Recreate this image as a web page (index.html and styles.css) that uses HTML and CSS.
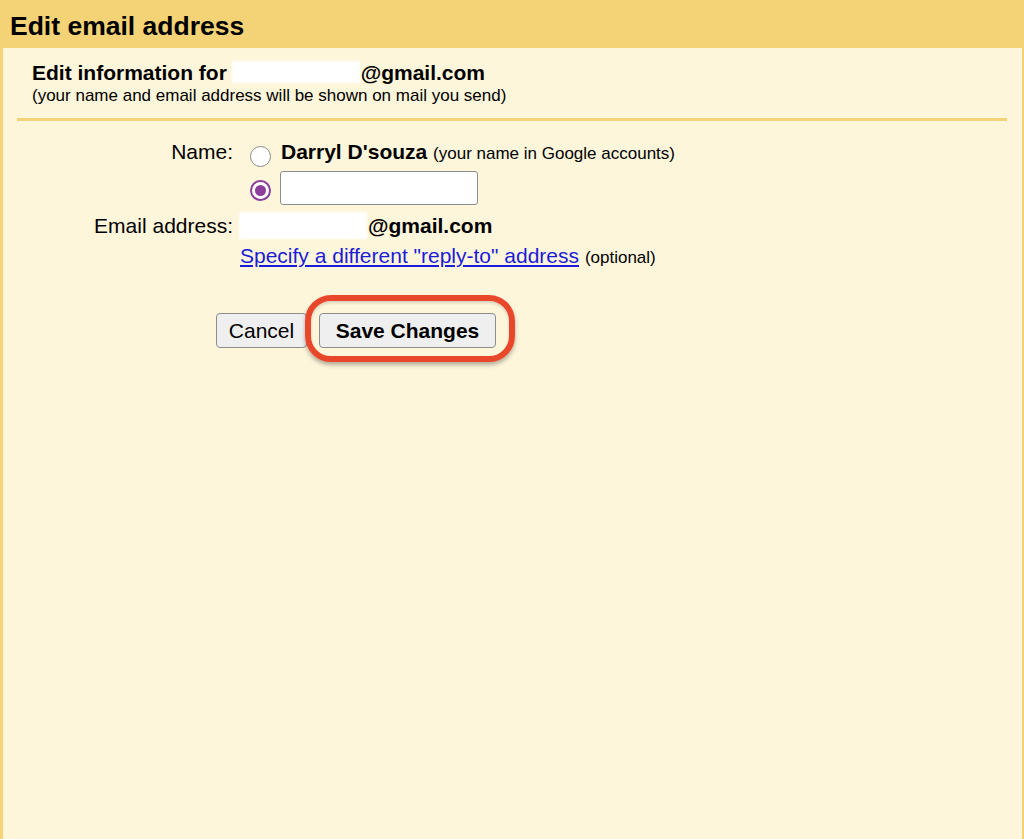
FILE: index.html
```html
<!DOCTYPE html>
<html>
<head>
<meta charset="utf-8">
<link rel="stylesheet" href="styles.css">
</head>
<body>
<div class="header"><h1 class="title">Edit email address</h1></div>
<div class="panel">
  <div class="intro">
    <div class="intro-title">Edit information for <span class="redact redact-a"></span>@gmail.com</div>
    <div class="intro-sub">(your name and email address will be shown on mail you send)</div>
  </div>
  <div class="sep"></div>
  <div class="form">
    <div class="label r1">Name:</div>
    <div class="value r1"><span class="radio"></span><span class="txt"><b>Darryl D'souza</b> <span class="small">(your name in Google accounts)</span></span></div>
    <div class="label r2"></div>
    <div class="value r2"><span class="radio checked"></span><span class="textbox"></span></div>
    <div class="label r3">Email address:</div>
    <div class="value r3"><span class="txt"><span class="redact redact-b"></span><b class="at">@gmail.com</b></span></div>
    <div class="label r4"></div>
    <div class="value r4"><span class="txt"><a class="link" href="#">Specify a different "reply-to" address</a> <span class="small">(optional)</span></span></div>
  </div>
  <div class="actions">
    <button class="btn cancel">Cancel</button>
    <span class="highlight"><button class="btn save">Save Changes</button></span>
  </div>
</div>
</body>
</html>
```
FILE: styles.css
```css
html, body {
  margin: 0;
  padding: 0;
}
body {
  min-height: 100vh;
  display: flex;
  flex-direction: column;
  font-family: "Liberation Sans", Arial, Helvetica, sans-serif;
  color: #000;
  background: #f3d375;
}
.header {
  height: 48px;
  box-sizing: border-box;
  padding: 11px 0 0 10px;
  background: #f3d375;
}
.title {
  margin: 0;
  font-size: 26.5px;
  font-weight: bold;
  line-height: 31px;
}
.panel {
  flex: 1;
  background: #fef6db;
  border-left: 3px solid #f3d375;
  border-right: 2px solid #f3d375;
}
.intro {
  padding: 13px 0 0 29px;
}
.intro-title {
  font-size: 21px;
  font-weight: bold;
  line-height: 24px;
}
.intro-sub {
  font-size: 17px;
  line-height: 21px;
}
.redact {
  display: inline-block;
  background: #ffffff;
  box-shadow: 0 0 2px 1px rgba(255, 255, 255, 0.9);
}
.redact-a {
  width: 126px;
  height: 20px;
  vertical-align: -2px;
  margin-right: 2px;
}
.redact-b {
  width: 126px;
  height: 25px;
  vertical-align: -5px;
}
.at {
  margin-left: 2px;
}
.sep {
  height: 3px;
  margin: 12px 15px 0 14px;
  background: #f3d375;
}
.form {
  margin-top: 14px;
  display: grid;
  grid-template-columns: 230px 1fr;
  column-gap: 7px;
  font-size: 21px;
}
.label {
  text-align: right;
}
.value {
  display: flex;
  align-items: flex-start;
}
.r1 { height: 34px; line-height: 34px; }
.r2 { height: 42px; }
.r3, .r4 { height: 30px; line-height: 30px; }
.txt {
  white-space: nowrap;
}
.small {
  font-size: 17px;
}
.radio {
  flex: none;
  box-sizing: border-box;
  width: 21px;
  height: 21px;
  margin: 11px 0 0 10px;
  border: 1px solid #8a8a8a;
  border-radius: 50%;
  background: #ffffff;
}
.r1 .txt {
  margin-left: 10px;
}
.radio.checked {
  width: 21px;
  height: 21px;
  border: 2px solid #8b3f9b;
  display: flex;
  align-items: center;
  justify-content: center;
}
.radio.checked::before {
  content: "";
  width: 11px;
  height: 11px;
  border-radius: 50%;
  background: #8b3f9b;
}
.textbox {
  flex: none;
  box-sizing: border-box;
  width: 198px;
  height: 34px;
  margin: 2px 0 0 9px;
  background: #ffffff;
  border: 1px solid #8d8d8d;
  border-radius: 3px;
}
.link {
  color: #1b1bd9;
  text-decoration: underline;
}
.actions {
  margin-top: 42px;
  padding-left: 213px;
  display: flex;
  gap: 12px;
  align-items: flex-start;
}
.btn {
  box-sizing: border-box;
  height: 35px;
  margin: 0;
  font-family: "Liberation Sans", Arial, Helvetica, sans-serif;
  font-size: 21px;
  line-height: 33px;
  color: #000;
  background: #efefef;
  border: 1px solid #8d8d8d;
  border-radius: 4px;
}
.cancel {
  width: 91px;
  padding: 0;
}
.save {
  width: 177px;
  padding: 0;
  font-weight: bold;
}
.highlight {
  position: relative;
  display: inline-block;
}
.highlight::after {
  content: "";
  position: absolute;
  top: -18px;
  bottom: -14px;
  left: -14px;
  right: -19px;
  border: 6px solid #e8472b;
  border-radius: 26px;
  box-shadow: 0 3px 4px rgba(0, 0, 0, 0.3), inset 0 2px 3px rgba(0, 0, 0, 0.15);
  pointer-events: none;
}
```
